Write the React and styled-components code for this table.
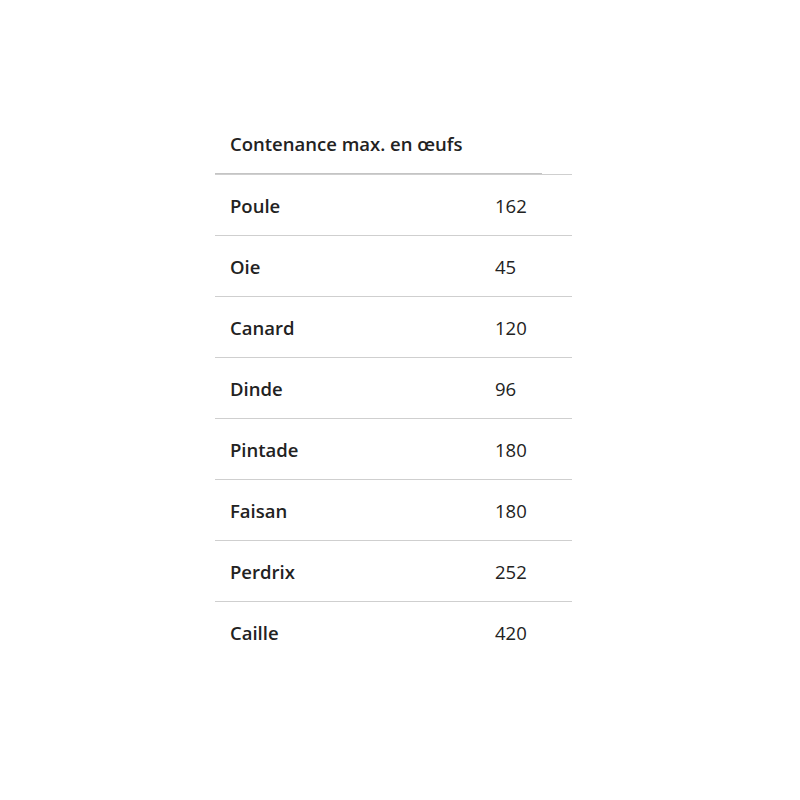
import React from "react";
import styled, { createGlobalStyle } from "styled-components";

const Global = createGlobalStyle`
  html, body { margin: 0; padding: 0; background: #fff; }
  body { font-family: "Open Sans", "Noto Sans", sans-serif; color: #222; }
`;

const Table = styled.table`
  border-collapse: collapse;
  table-layout: fixed;
  margin: 114px 0 0 215px;
  width: 357px;
  font-size: 18.5px;
`;

const HeadCell = styled.th`
  padding: 0;
  text-align: left;
  border-bottom: 1px solid #cfcfcf;
`;

const HeadLabel = styled.div`
  box-sizing: border-box;
  width: 327px;
  padding: 16px 15px 15px;
  line-height: 28px;
  font-weight: 600;
  border-bottom: 2px solid #c4c4c4;
  margin-bottom: -1px;
`;

const Row = styled.tr`
  & + & td, & + & th { border-top: 1px solid #cfcfcf; }
`;

const Name = styled.th`
  text-align: left;
  font-weight: 600;
  padding: 17px 15px 15px;
  line-height: 28px;
  width: 250px;
  box-sizing: border-box;
`;

const Value = styled.td`
  padding: 17px 15px 15px;
  line-height: 28px;
  font-weight: 400;
`;

const data = [
  ["Poule", 162],
  ["Oie", 45],
  ["Canard", 120],
  ["Dinde", 96],
  ["Pintade", 180],
  ["Faisan", 180],
  ["Perdrix", 252],
  ["Caille", 420],
];

export default function App() {
  return (
    <>
      <Global />
      <Table>
        <colgroup>
          <col style={{ width: "265px" }} />
          <col style={{ width: "92px" }} />
        </colgroup>
        <thead>
          <tr>
            <HeadCell colSpan={2}>
              <HeadLabel>Contenance max. en œufs</HeadLabel>
            </HeadCell>
          </tr>
        </thead>
        <tbody>
          {data.map(([n, v]) => (
            <Row key={n}>
              <Name scope="row">{n}</Name>
              <Value>{v}</Value>
            </Row>
          ))}
        </tbody>
      </Table>
    </>
  );
}
